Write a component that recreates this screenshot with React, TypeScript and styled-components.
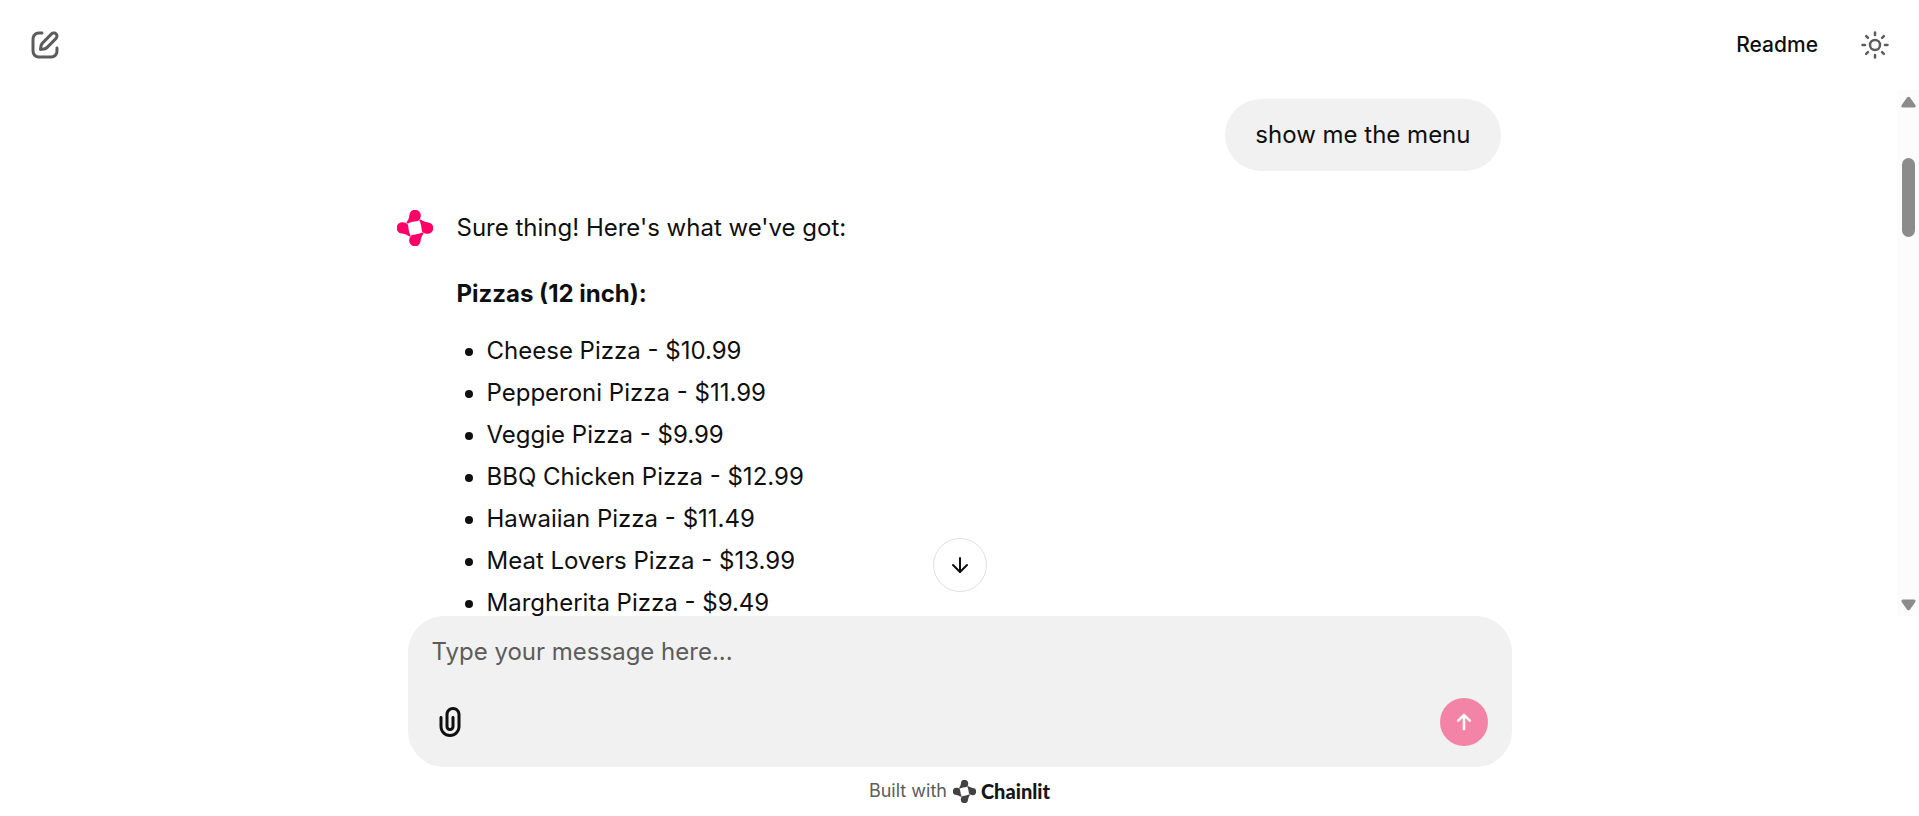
import React from 'react';
import styled, { createGlobalStyle } from 'styled-components';
import { ArrowDown, Sun } from 'lucide-react';

const GlobalStyle = createGlobalStyle`
  *, *::before, *::after { box-sizing: border-box; }
  body {
    margin: 0;
    background: #fff;
    color: #0f0f0f;
    font-family: Inter, "Liberation Sans", sans-serif;
    font-size: 24px;
    line-height: 42px;
  }
  button, textarea { font: inherit; color: inherit; }
  p, ul { margin: 0; }
`;

const Page = styled.div`
  display: flex;
  flex-direction: column;
  height: 100vh;
  overflow: hidden;
`;

const Header = styled.header`
  display: flex;
  align-items: center;
  justify-content: space-between;
  flex: none;
  height: 90px;
  padding: 0 17px 0 18px;
`;

const HeaderGroup = styled.div`
  display: flex;
  align-items: center;
  gap: 6px;
`;

const IconButton = styled.button<{ $size: number }>`
  display: inline-flex;
  align-items: center;
  justify-content: center;
  width: ${({ $size }) => $size}px;
  height: ${({ $size }) => $size}px;
  padding: 0;
  border: 0;
  border-radius: 9px;
  background: transparent;
  cursor: pointer;
`;

const MutedIconButton = styled(IconButton)`
  color: #5c5c5c;
`;

const TextButton = styled.button`
  height: 54px;
  padding: 0 24px;
  border: 0;
  background: transparent;
  font-size: 21px;
  font-weight: 500;
  line-height: 30px;
  cursor: pointer;
`;

const Conversation = styled.main`
  position: relative;
  display: flex;
  flex: 1;
  min-height: 0;
`;

const Viewport = styled.div`
  flex: 1;
  overflow: hidden;
`;

const Thread = styled.div`
  display: flex;
  flex-direction: column;
  gap: 36px;
  width: 100%;
  max-width: 1152px;
  margin: 0 auto;
  padding: 9px 24px 0;
`;

const UserBubble = styled.div`
  align-self: flex-end;
  padding: 15px 30px;
  border-radius: 36px;
  background: #f1f1f1;
`;

const Reply = styled.article`
  display: flex;
  gap: 24px;
`;

const Avatar = styled.div`
  display: flex;
  align-items: center;
  flex: none;
  height: 42px;
  color: #ff0066;
`;

const ReplyBody = styled.div`
  flex: 1;
`;

const SectionTitle = styled.p`
  margin-top: 24px;
  font-weight: 700;
`;

const MenuList = styled.ul`
  margin-top: 15px;
  padding-left: 30px;
`;

const Scrollbar = styled.div`
  display: flex;
  flex-direction: column;
  align-items: center;
  justify-content: space-between;
  flex: none;
  width: 22px;
  padding: 6px 0 5px;
  background: #fcfcfc;
  color: #8b8b8b;
`;

const ScrollTrack = styled.div`
  flex: 1;
  padding-top: 50px;
`;

const ScrollThumb = styled.div`
  width: 13px;
  height: 79px;
  border-radius: 7px;
  background: currentColor;
`;

const ScrollDown = styled.button`
  position: absolute;
  bottom: 24px;
  left: 50%;
  display: flex;
  align-items: center;
  justify-content: center;
  width: 54px;
  height: 54px;
  padding: 0;
  border: 1px solid #e0e0e0;
  border-radius: 50%;
  background: #fff;
  transform: translateX(-50%);
  cursor: pointer;
`;

const Bottom = styled.footer`
  display: flex;
  flex-direction: column;
  flex: none;
  width: 100%;
  max-width: 1152px;
  margin: 0 auto;
  padding: 0 24px 13px;
`;

const Composer = styled.form`
  display: flex;
  flex-direction: column;
  gap: 25px;
  padding: 15px 24px 21px;
  border-radius: 36px;
  background: #f1f1f1;
`;

const MessageInput = styled.textarea`
  display: block;
  width: 100%;
  height: 42px;
  padding: 0;
  border: 0;
  outline: none;
  background: transparent;
  resize: none;
  overflow: hidden;
  &::placeholder { color: #5c5c5c; opacity: 1; }
`;

const ComposerActions = styled.div`
  display: flex;
  align-items: center;
  justify-content: space-between;
`;

const AttachButton = styled(IconButton)`
  width: 36px;
`;

const SendButton = styled(IconButton)`
  border-radius: 50%;
  background: #f483a8;
  color: #fff;
`;

const Credit = styled.a`
  display: flex;
  align-items: center;
  justify-content: center;
  gap: 6px;
  padding-top: 12px;
  color: #5c5c5c;
  font-size: 18px;
  line-height: 24px;
  text-decoration: none;
`;

const Brand = styled.span`
  display: flex;
  align-items: center;
  gap: 5px;
  color: #424242;
`;

const BrandName = styled.span`
  color: #161616;
  font-family: Lato, Inter, sans-serif;
  font-size: 20px;
  font-weight: 900;
`;

const EditIcon = () => (
  <svg width="36" height="36" viewBox="0 0 24 24" fill="currentColor" aria-hidden="true">
    <path
      fillRule="evenodd"
      clipRule="evenodd"
      d="M15.673 3.913C16.892 2.694 18.868 2.694 20.087 3.913C21.306 5.132 21.306 7.108 20.087 8.327L14.15 14.264C13.385 15.029 12.393 15.526 11.322 15.679L9.141 15.99C8.83 16.034 8.515 15.93 8.293 15.707C8.07 15.485 7.966 15.17 8.01 14.859L8.321 12.679C8.474 11.608 8.971 10.615 9.736 9.85L15.673 3.913ZM18.673 5.327C18.235 4.889 17.525 4.889 17.087 5.327L11.15 11.264C10.691 11.723 10.393 12.319 10.301 12.961L10.179 13.822L11.039 13.699C11.681 13.607 12.277 13.309 12.736 12.85L18.673 6.913C19.111 6.475 19.111 5.765 18.673 5.327ZM11 3.999C11 4.552 10.553 5 10.001 5C9.002 5.001 8.298 5.008 7.747 5.061C7.207 5.112 6.885 5.201 6.638 5.327C6.074 5.615 5.615 6.074 5.327 6.638C5.193 6.901 5.101 7.249 5.051 7.854C5.001 8.471 5 9.263 5 10.4V13.6C5 14.737 5.001 15.529 5.051 16.146C5.101 16.751 5.193 17.099 5.327 17.362C5.615 17.926 6.074 18.385 6.638 18.673C6.901 18.807 7.249 18.899 7.854 18.949C8.471 18.999 9.263 19 10.4 19H13.6C14.737 19 15.529 18.999 16.146 18.949C16.751 18.899 17.099 18.807 17.362 18.673C17.927 18.385 18.385 17.926 18.673 17.362C18.799 17.115 18.888 16.793 18.939 16.254C18.992 15.702 18.999 14.998 19 13.999C19 13.447 19.448 13 20.001 13C20.553 13 21 13.448 21 14.001C20.999 14.979 20.993 15.781 20.93 16.443C20.866 17.116 20.739 17.714 20.455 18.27C19.976 19.211 19.211 19.976 18.27 20.455C17.678 20.757 17.038 20.883 16.309 20.942C15.601 21 14.727 21 13.643 21H10.357C9.273 21 8.399 21 7.691 20.942C6.963 20.883 6.322 20.757 5.73 20.455C4.789 19.976 4.024 19.211 3.545 18.27C3.243 17.678 3.117 17.037 3.058 16.309C3 15.601 3 14.727 3 13.643V10.357C3 9.273 3 8.399 3.058 7.691C3.117 6.962 3.243 6.322 3.545 5.73C4.024 4.789 4.789 4.024 5.73 3.545C6.286 3.261 6.884 3.134 7.557 3.07C8.219 3.007 9.021 3.001 9.999 3C10.552 3 11 3.447 11 3.999Z"
    />
  </svg>
);

const PaperclipIcon = () => (
  <svg width="36" height="36" viewBox="0 0 24 24" fill="currentColor" aria-hidden="true">
    <path d="M9 7C9 4.239 11.239 2 14 2C16.761 2 19 4.239 19 7V15C19 18.866 15.866 22 12 22C8.134 22 5 18.866 5 15V9C5 8.448 5.448 8 6 8C6.552 8 7 8.448 7 9V15C7 17.761 9.239 20 12 20C14.761 20 17 17.761 17 15V7C17 5.343 15.657 4 14 4C12.343 4 11 5.343 11 7V15C11 15.552 11.448 16 12 16C12.552 16 13 15.552 13 15V9C13 8.448 13.448 8 14 8C14.552 8 15 8.448 15 9V15C15 16.657 13.657 18 12 18C10.343 18 9 16.657 9 15V7Z" />
  </svg>
);

const SendIcon = () => (
  <svg width="36" height="36" viewBox="0 0 32 32" fill="currentColor" aria-hidden="true">
    <path d="M15.192 8.906C15.638 8.46 16.362 8.46 16.808 8.906L21.951 14.049C22.397 14.495 22.397 15.219 21.951 15.665C21.505 16.112 20.781 16.112 20.335 15.665L17.143 12.473V22.286C17.143 22.917 16.631 23.429 16 23.429C15.369 23.429 14.857 22.917 14.857 22.286V12.473L11.665 15.665C11.219 16.112 10.495 16.112 10.049 15.665C9.603 15.219 9.603 14.495 10.049 14.049L15.192 8.906Z" />
  </svg>
);

const LogoMark = ({ size }: { size: number }) => (
  <svg width={size} height={size} viewBox="-18 -18 36 36" fill="currentColor" aria-hidden="true">
    {[0, 90, 180, 270].map((angle) => (
      <path
        key={angle}
        transform={`rotate(${angle})`}
        d="M-8.3 -5.9L-6.9 -8.2C-6 -9.8 -5.9 -11.2 -5.6 -13A5.7 5.7 0 0 1 5.8 -12.2C5.8 -10.4 5 -8.6 3.7 -7.4C2.8 -6.7 1.4 -6.7 -0.2 -6.5C-2.9 -6.2 -5 -5.5 -7 -4.6C-8.1 -4.2 -8.9 -4.9 -8.3 -5.9Z"
      />
    ))}
  </svg>
);

const ScrollArrow = ({ down = false }: { down?: boolean }) => (
  <svg width="15" height="12" viewBox="0 0 15 12" fill="currentColor" aria-hidden="true">
    <path
      transform={down ? 'rotate(180 7.5 6)' : undefined}
      d="M6 1.6Q7.5 -0.2 9 1.6L14.3 9Q15.3 11.2 13 11.5H2Q-0.3 11.2 0.7 9Z"
    />
  </svg>
);

const pizzas = [
  ['Cheese Pizza', '10.99'],
  ['Pepperoni Pizza', '11.99'],
  ['Veggie Pizza', '9.99'],
  ['BBQ Chicken Pizza', '12.99'],
  ['Hawaiian Pizza', '11.49'],
  ['Meat Lovers Pizza', '13.99'],
  ['Margherita Pizza', '9.49'],
];

export default function App() {
  return (
    <Page>
      <GlobalStyle />
      <Header>
        <MutedIconButton $size={54} type="button" aria-label="New chat">
          <EditIcon />
        </MutedIconButton>
        <HeaderGroup>
          <TextButton type="button">Readme</TextButton>
          <MutedIconButton $size={54} type="button" aria-label="Toggle theme">
            <Sun size={30} />
          </MutedIconButton>
        </HeaderGroup>
      </Header>

      <Conversation>
        <Viewport>
          <Thread>
            <UserBubble>show me the menu</UserBubble>
            <Reply>
              <Avatar>
                <LogoMark size={36} />
              </Avatar>
              <ReplyBody>
                <p>Sure thing! Here's what we've got:</p>
                <SectionTitle>Pizzas (12 inch):</SectionTitle>
                <MenuList>
                  {pizzas.map(([name, price]) => (
                    <li key={name}>{`${name} - $${price}`}</li>
                  ))}
                </MenuList>
              </ReplyBody>
            </Reply>
          </Thread>
        </Viewport>
        <Scrollbar aria-hidden="true">
          <ScrollArrow />
          <ScrollTrack>
            <ScrollThumb />
          </ScrollTrack>
          <ScrollArrow down />
        </Scrollbar>
        <ScrollDown type="button" aria-label="Scroll to bottom">
          <ArrowDown size={24} />
        </ScrollDown>
      </Conversation>

      <Bottom>
        <Composer onSubmit={(event) => event.preventDefault()}>
          <MessageInput rows={1} aria-label="Message" placeholder="Type your message here..." />
          <ComposerActions>
            <AttachButton $size={48} type="button" aria-label="Attach files">
              <PaperclipIcon />
            </AttachButton>
            <SendButton $size={48} type="submit" aria-label="Send message">
              <SendIcon />
            </SendButton>
          </ComposerActions>
        </Composer>
        <Credit href="#chainlit">
          Built with
          <Brand>
            <LogoMark size={23} />
            <BrandName>Chainlit</BrandName>
          </Brand>
        </Credit>
      </Bottom>
    </Page>
  );
}
